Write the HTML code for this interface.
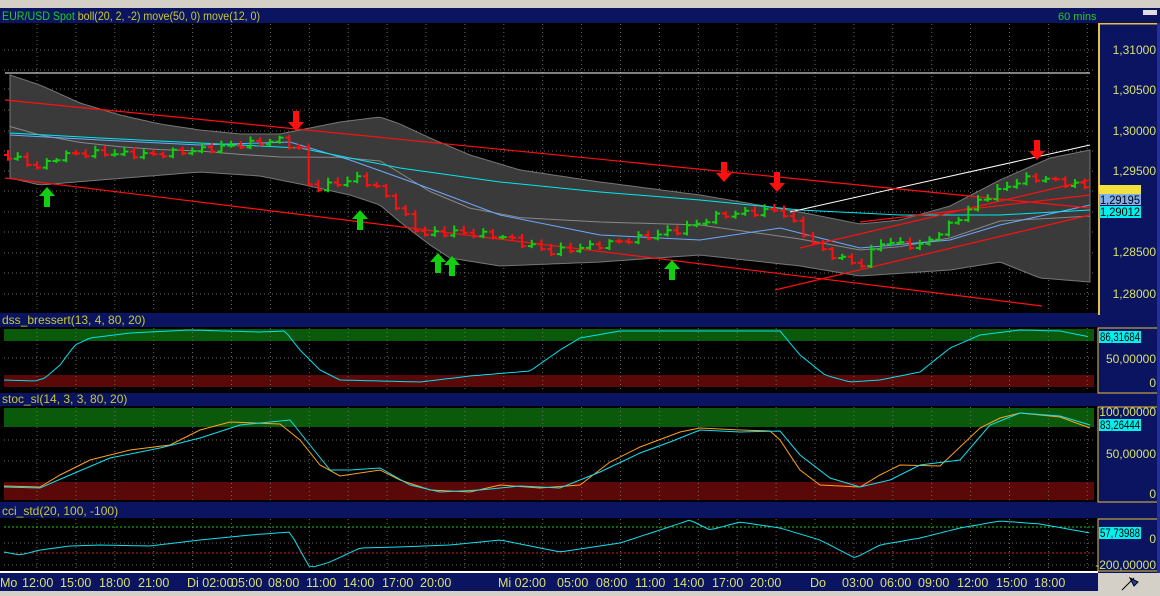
<!DOCTYPE html>
<html><head><meta charset="utf-8"><style>
html,body{margin:0;padding:0;background:#000;width:1160px;height:596px;overflow:hidden;font-family:"Liberation Sans",sans-serif}
svg{display:block}
</style></head><body>
<svg id="s" width="1160" height="596" xmlns="http://www.w3.org/2000/svg" font-family="Liberation Sans, sans-serif">
<rect x="0" y="0" width="1160" height="596" fill="#000"/>
<rect x="0" y="0" width="1160" height="8" fill="#d4d0c8"/>
<rect x="0" y="8" width="1160" height="15" fill="#0a1460"/>
<text x="2" y="20" font-size="12" fill="#22cc22" textLength="258" lengthAdjust="spacingAndGlyphs">EUR/USD Spot <tspan fill="#c8c830">boll(20, 2, -2) move(50, 0) move(12, 0)</tspan></text>
<text x="1058" y="20" font-size="11" fill="#22cc22">60 mins</text>
<rect x="1143" y="10" width="14" height="5" fill="#ddd"/>
<g id="g"></g>
<rect x="1098" y="23" width="62" height="550" fill="#0a1460"/>
<rect x="1098" y="23" width="2" height="292" fill="#e8c040"/>
<rect x="1098" y="23" width="60" height="1.5" fill="#e8c040"/>
<rect x="1098" y="328" width="60" height="65" fill="none" stroke="#e8c040" stroke-width="1"/>
<rect x="1098" y="407" width="60" height="95" fill="none" stroke="#e8c040" stroke-width="1"/>
<rect x="1098" y="519" width="60" height="52" fill="none" stroke="#e8c040" stroke-width="1"/>
<rect x="1157" y="23" width="3" height="550" fill="#2030a0"/>
<g font-size="12" fill="#d8e070" text-anchor="end">
<text x="1156" y="54">1,31000</text><text x="1156" y="94">1,30500</text><text x="1156" y="135">1,30000</text>
<text x="1156" y="175">1,29500</text><text x="1156" y="256">1,28500</text><text x="1156" y="298">1,28000</text>
<text x="1156" y="363">50,00000</text><text x="1156" y="387">0</text>
<text x="1156" y="416">100,00000</text><text x="1156" y="458">50,00000</text><text x="1156" y="498">0</text>
<text x="1156" y="543">0</text><text x="1156" y="569">-200,00000</text>
</g>
<rect x="1099" y="185" width="42" height="11" fill="#f0e040"/>
<rect x="1099" y="194" width="42" height="11" fill="#80b0f0"/><text x="1100" y="204" font-size="12" fill="#000" textLength="40" lengthAdjust="spacingAndGlyphs">1,29195</text>
<rect x="1099" y="207" width="42" height="11" fill="#888"/>
<rect x="1099" y="206" width="42" height="12" fill="#00f0f0"/><text x="1100" y="216" font-size="12" fill="#000" textLength="40" lengthAdjust="spacingAndGlyphs">1,29012</text>
<rect x="1099" y="331" width="42" height="12" fill="#00f0f0"/><text x="1100" y="341" font-size="12" fill="#000" textLength="40" lengthAdjust="spacingAndGlyphs">86,31684</text>
<rect x="1099" y="419" width="42" height="12" fill="#00f0f0"/><text x="1100" y="429" font-size="12" fill="#000" textLength="40" lengthAdjust="spacingAndGlyphs">83,26444</text>
<rect x="1099" y="527" width="42" height="12" fill="#00f0f0"/><text x="1100" y="537" font-size="12" fill="#000" textLength="40" lengthAdjust="spacingAndGlyphs">57,73988</text>
<rect x="0" y="571" width="1098" height="2" fill="#fff"/>
<rect x="0" y="573" width="1098" height="18" fill="#0a1460"/>
<rect x="1098" y="573" width="62" height="23" fill="#d4d0c8"/>
<path d="M1122 590 L1134 578 M1130 578 L1138 582 L1134 586 Z" stroke="#000" fill="#2040c0"/>
<rect x="0" y="591" width="1098" height="5" fill="#d4d0c8"/>
<g font-size="12.5" fill="#d8e070" id="t"></g>
</svg>
<script>
var g=document.getElementById('g'),h='';
function L(pts,c,w){return '<polyline fill="none" stroke="'+c+'" stroke-width="'+(w||1)+'" points="'+pts.map(p=>p.join(',')).join(' ')+'"/>';}
function interp(pts,x){for(var i=0;i<pts.length-1;i++){if(x>=pts[i][0]&&x<=pts[i+1][0]){var t=(x-pts[i][0])/(pts[i+1][0]-pts[i][0]);return pts[i][1]+t*(pts[i+1][1]-pts[i][1]);}}return pts[pts.length-1][1];}
function smooth(pts,step){var r=[];for(var x=pts[0][0];x<=pts[pts.length-1][0];x+=step)r.push([x,+interp(pts,x).toFixed(1)]);return r;}
h+='<rect x="0" y="313" width="1098" height="14" fill="#0a1460"/><text x="2" y="324" font-size="12" fill="#c8c830">dss_bressert(13, 4, 80, 20)</text>';
h+='<rect x="0" y="393" width="1098" height="13" fill="#0a1460"/><text x="2" y="403" font-size="12" fill="#c8c830">stoc_sl(14, 3, 3, 80, 20)</text>';
h+='<rect x="0" y="502" width="1098" height="16" fill="#0a1460"/><text x="2" y="515" font-size="12" fill="#c8c830">cci_std(20, 100, -100)</text>';
h+='<rect x="4" y="329" width="1090" height="12" fill="#0b5a0b"/><rect x="4" y="375" width="1090" height="12" fill="#5a0808"/>';
h+='<rect x="4" y="408" width="1090" height="19" fill="#0b5a0b"/><rect x="4" y="482" width="1090" height="18" fill="#5a0808"/>';
var gr='';
for(var x=37;x<1095;x+=38.9){gr+='M'+x.toFixed(1)+' 24V312M'+x.toFixed(1)+' 328V392M'+x.toFixed(1)+' 407V501M'+x.toFixed(1)+' 519V571';}
[50,70,89,110,131,151,171,191,212,232,253,273,294,358,440,461,543,565].forEach(y=>{gr+='M4 '+y+'H1094';});
h+='<path d="'+gr+'" stroke="#6a6a6a" stroke-width="1" stroke-dasharray="1,3" fill="none"/>';
h+='<path d="M4 527H1094" stroke="#22cc22" stroke-dasharray="2,2"/><path d="M4 553H1094" stroke="#cc2222" stroke-dasharray="2,2"/>';
var up=[[10,75],[40,85],[80,103],[120,115],[160,124],[200,130],[240,134],[280,134],[310,128],[340,122],[380,117],[400,124],[430,138],[470,155],[520,170],[600,182],[700,195],[800,212],[860,224],[900,220],[950,206],[1000,180],[1050,158],[1090,150]];
var lo=[[10,178],[40,185],[100,180],[200,172],[260,176],[300,184],[350,195],[380,205],[400,222],[430,245],[450,258],[500,266],[600,262],[700,255],[800,266],[860,276],[950,270],[1000,262],[1040,278],[1090,282]];
var poly=smooth(up,4).concat(smooth(lo,4).reverse());
h+='<polygon points="'+poly.map(p=>p.join(',')).join(' ')+'" fill="#3a3a3a" stroke="#777"/>';
var mid=up.map(p=>[p[0],(p[1]+interp(lo,p[0]))/2]);
h+=L(mid,'#888');
h+=L([[10,135],[100,140],[200,145],[290,142],[350,160],[420,185],[500,215],[600,235],[700,240],[780,228],[860,248],[950,240],[1000,225],[1090,205]],'#6aa8ff');
h+=L([[10,133],[100,138],[200,143],[300,148],[400,168],[500,182],[600,192],[700,200],[800,210],[900,215],[1000,215],[1090,210]],'#00e8f0');
h+='<path d="M5 73H1090" stroke="#fff"/><path d="M790 212L1090 145" stroke="#fff"/>';
h+='<path d="M5 100L1090 208M5 178L1042 306M775 290L1090 215M800 248L1090 180M860 222L1090 195" stroke="#ff1010" stroke-width="1.2"/>';
var pr=[[5,155],[40,168],[60,155],[100,153],[150,155],[200,150],[280,140],[300,150],[310,190],[330,185],[360,178],[380,190],[400,210],[420,235],[450,232],[500,236],[550,252],[600,245],[640,238],[680,230],[720,215],[780,210],[800,230],[820,250],[860,266],[880,242],[920,246],[950,225],[980,200],[1020,180],[1040,178],[1090,188]];
var bars='',prev=interp(pr,5);
for(var x=8;x<1092;x+=9.7){var c=interp(pr,x)+Math.sin(x*1.7)*3;var col=c<prev?'#10d010':'#ff1010';var hi=Math.min(c,prev)-2-Math.abs(Math.sin(x))*3,lw=Math.max(c,prev)+2;
bars+='<path d="M'+x.toFixed(1)+' '+hi.toFixed(1)+'V'+lw.toFixed(1)+'M'+(x-4).toFixed(1)+' '+prev.toFixed(1)+'H'+x.toFixed(1)+'M'+x.toFixed(1)+' '+c.toFixed(1)+'H'+(x+4).toFixed(1)+'" stroke="'+col+'" stroke-width="2" fill="none"/>';prev=c;}
h+=bars;
function ua(x,y){return '<path d="M'+x+' '+y+'l-8 9h5v11h6v-11h5z" fill="#10d010"/>';}
function da(x,y){return '<path d="M'+x+' '+(y+20)+'l-8 -9h5v-11h6v11h5z" fill="#ff1010"/>';}
h+=ua(47,187)+ua(360,210)+ua(438,253)+ua(452,256)+ua(672,260);
h+=da(296,111)+da(724,162)+da(777,172)+da(1037,140);
h+=L(smooth([[4,380],[35,381],[45,378],[60,365],[75,345],[90,338],[130,333],[190,330],[260,332],[285,331],[300,350],[320,370],[340,380],[420,382],[470,376],[530,371],[560,350],[580,338],[620,331],[700,331],[780,331],[800,355],[825,375],[850,382],[880,380],[920,372],[950,348],[980,335],[1020,330],[1060,331],[1090,337]],4),'#00e0f0');
h+=L([[4,486],[40,487],[60,475],[90,460],[130,450],[170,445],[200,430],[230,422],[280,424],[300,440],[320,465],[340,476],[380,470],[400,480],[430,490],[470,492],[500,485],[540,488],[580,485],[610,462],[640,447],[680,432],[700,428],[740,430],[770,431],[780,440],[800,470],[820,485],[860,487],[880,475],[900,465],[940,466],[980,428],[1000,418],[1020,413],[1060,417],[1090,428]],'#ffa020');
h+=L([[4,487],[40,488],[70,475],[110,458],[160,448],[200,438],[240,425],[290,420],[310,445],[330,470],[350,470],[380,468],[410,485],[440,492],[480,490],[520,486],[560,488],[600,472],[640,453],[670,442],[700,430],[740,432],[780,431],[800,455],[830,478],[860,487],[890,480],[920,465],[960,460],[990,425],[1020,413],[1060,416],[1090,425]],'#10e0f0');
h+=L(smooth([[4,552],[20,555],[40,550],[70,546],[100,545],[150,546],[200,540],[250,535],[290,532],[300,550],[310,568],[330,562],[360,548],[400,547],[450,545],[500,540],[560,552],[620,543],[660,530],[690,520],[710,530],[740,522],[780,528],[820,540],[855,558],[880,545],[920,538],[960,528],[1000,521],[1040,524],[1090,533]],5),'#10e0f0');
g.innerHTML=h;
var t=[['Mo',0],['12:00',22],['15:00',60],['18:00',99],['21:00',138],['Di 02:00',187],['05:00',231],['08:00',268],['11:00',306],['14:00',343],['17:00',382],['20:00',420],['Mi 02:00',498],['05:00',557],['08:00',596],['11:00',635],['14:00',673],['17:00',712],['20:00',750],['Do',810],['03:00',842],['06:00',880],['09:00',918],['12:00',957],['15:00',996],['18:00',1034]];
document.getElementById('t').innerHTML=t.map(a=>'<text x="'+a[1]+'" y="587">'+a[0]+'</text>').join('');
</script>
</body></html>
